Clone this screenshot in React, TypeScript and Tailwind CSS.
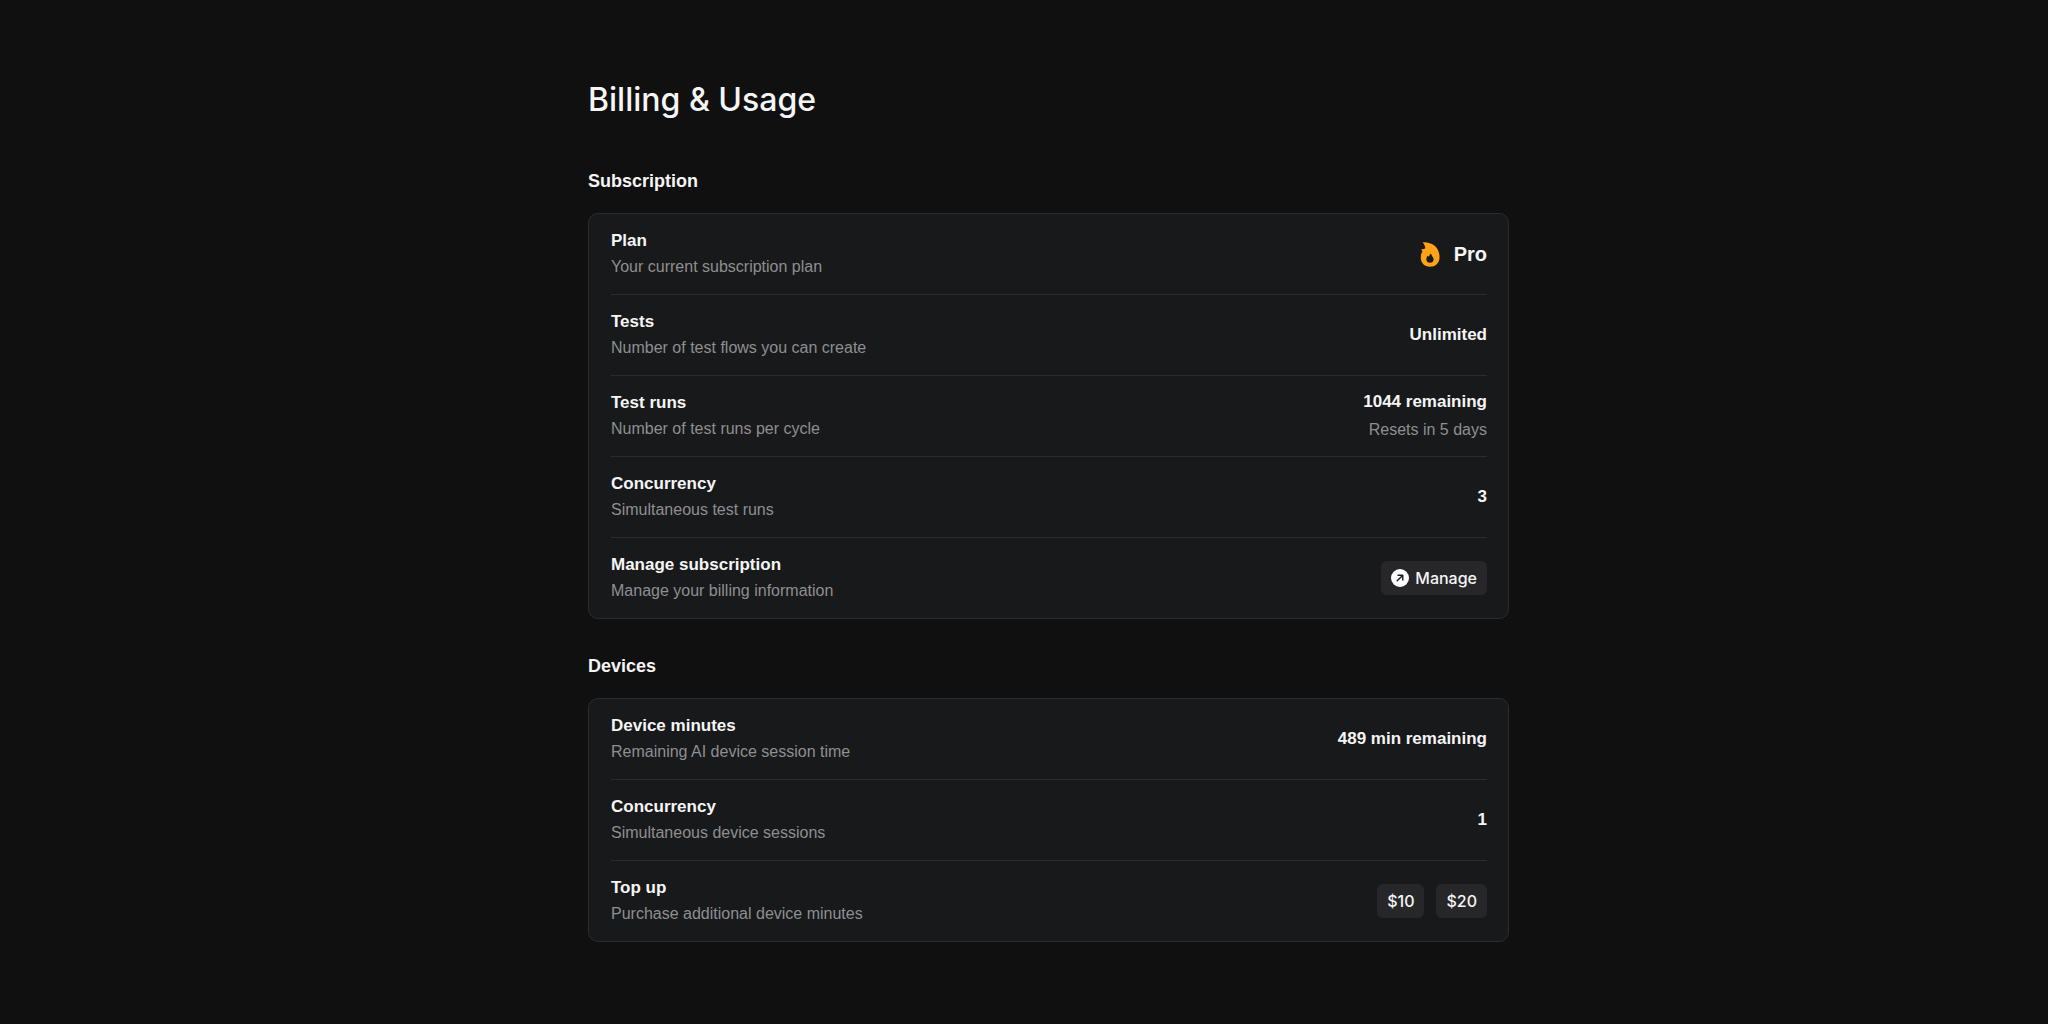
import type { ReactNode } from "react";

const sans = "font-['Liberation_Sans',Arial,sans-serif]";
const inter = "font-[Inter,sans-serif]";

function FlameIcon() {
  return (
    <svg viewBox="0 0 60 76" className="h-[25px] w-5" fill="#ffa216" fillRule="evenodd" aria-hidden="true">
      <path d="M8 1C38 0 59 17 59 46C59 64 47 75 30 75C13 75 2 64 2 47C2 39 4 34 7 29L3 22C8 23 12 22 16 19C15 12 12 7 8 1ZM31 35C30 38 28 42 26 45C25 44 24 43 23 42C20 45 19 49 19 53C19 59 24 63 30 63C36 63 41 59 41 53C41 49 39 46 37 44C36 41 34 37 31 35Z" />
    </svg>
  );
}

function ArrowCircleIcon() {
  return (
    <svg viewBox="0 0 18 18" className="size-[18px]" aria-hidden="true">
      <circle cx="9" cy="9" r="9" fill="#fff" />
      <path d="M6.2 11.8 11.6 6.4M7 6.2h4.8V11" fill="none" stroke="#1b1b1d" strokeWidth="1.4" strokeLinecap="round" strokeLinejoin="round" />
    </svg>
  );
}

function Row({ title, text, children }: { title: string; text: string; children: ReactNode }) {
  return (
    <li className="flex min-h-[81px] items-center justify-between gap-6 border-b border-[#2b2c2e] last:min-h-20 last:border-b-0">
      <div>
        <h3 className="text-[17px] leading-6 font-bold text-[#f5f5f5]">{title}</h3>
        <p className="mt-0.5 text-base leading-6 text-[#8e8f90]">{text}</p>
      </div>
      {children}
    </li>
  );
}

function Value({ children }: { children: ReactNode }) {
  return <p className="text-right text-[17px] leading-6 font-bold text-[#f5f5f5]">{children}</p>;
}

function Button({ children }: { children: ReactNode }) {
  return (
    <button type="button" className={`${inter} flex h-[34px] items-center gap-1.5 rounded-md bg-[#27272a] px-2.5 text-base font-medium text-[#f5f5f5]`}>
      {children}
    </button>
  );
}

function Section({ title, children }: { title: string; children: ReactNode }) {
  return (
    <section>
      <h2 className="text-lg leading-7 font-bold text-[#f5f5f5]">{title}</h2>
      <ul className="mt-[18px] rounded-[10px] border border-[#2b2c2e] bg-[#18191b] pr-[21px] pl-[22px]">{children}</ul>
    </section>
  );
}

export default function App() {
  return (
    <div className={`${sans} min-h-screen bg-[#101010] pl-[49px]`}>
      <main className="mx-auto max-w-[921px] pt-20 pb-16">
        <h1 className={`${inter} text-[32px] leading-10 font-medium text-[#f5f5f5]`}>Billing &amp; Usage</h1>
        <div className="mt-[47px] flex flex-col gap-[33px]">
          <Section title="Subscription">
            <Row title="Plan" text="Your current subscription plan">
              <p className="flex items-center gap-3.5 text-xl font-bold text-[#f5f5f5]">
                <FlameIcon />
                Pro
              </p>
            </Row>
            <Row title="Tests" text="Number of test flows you can create">
              <Value>Unlimited</Value>
            </Row>
            <Row title="Test runs" text="Number of test runs per cycle">
              <div>
                <Value>1044 remaining</Value>
                <p className="mt-1 text-right text-base leading-6 text-[#8e8f90]">Resets in 5 days</p>
              </div>
            </Row>
            <Row title="Concurrency" text="Simultaneous test runs">
              <Value>3</Value>
            </Row>
            <Row title="Manage subscription" text="Manage your billing information">
              <Button>
                <ArrowCircleIcon />
                Manage
              </Button>
            </Row>
          </Section>
          <Section title="Devices">
            <Row title="Device minutes" text="Remaining AI device session time">
              <Value>489 min remaining</Value>
            </Row>
            <Row title="Concurrency" text="Simultaneous device sessions">
              <Value>1</Value>
            </Row>
            <Row title="Top up" text="Purchase additional device minutes">
              <div className="flex gap-3">
                <Button>$10</Button>
                <Button>$20</Button>
              </div>
            </Row>
          </Section>
        </div>
      </main>
    </div>
  );
}
